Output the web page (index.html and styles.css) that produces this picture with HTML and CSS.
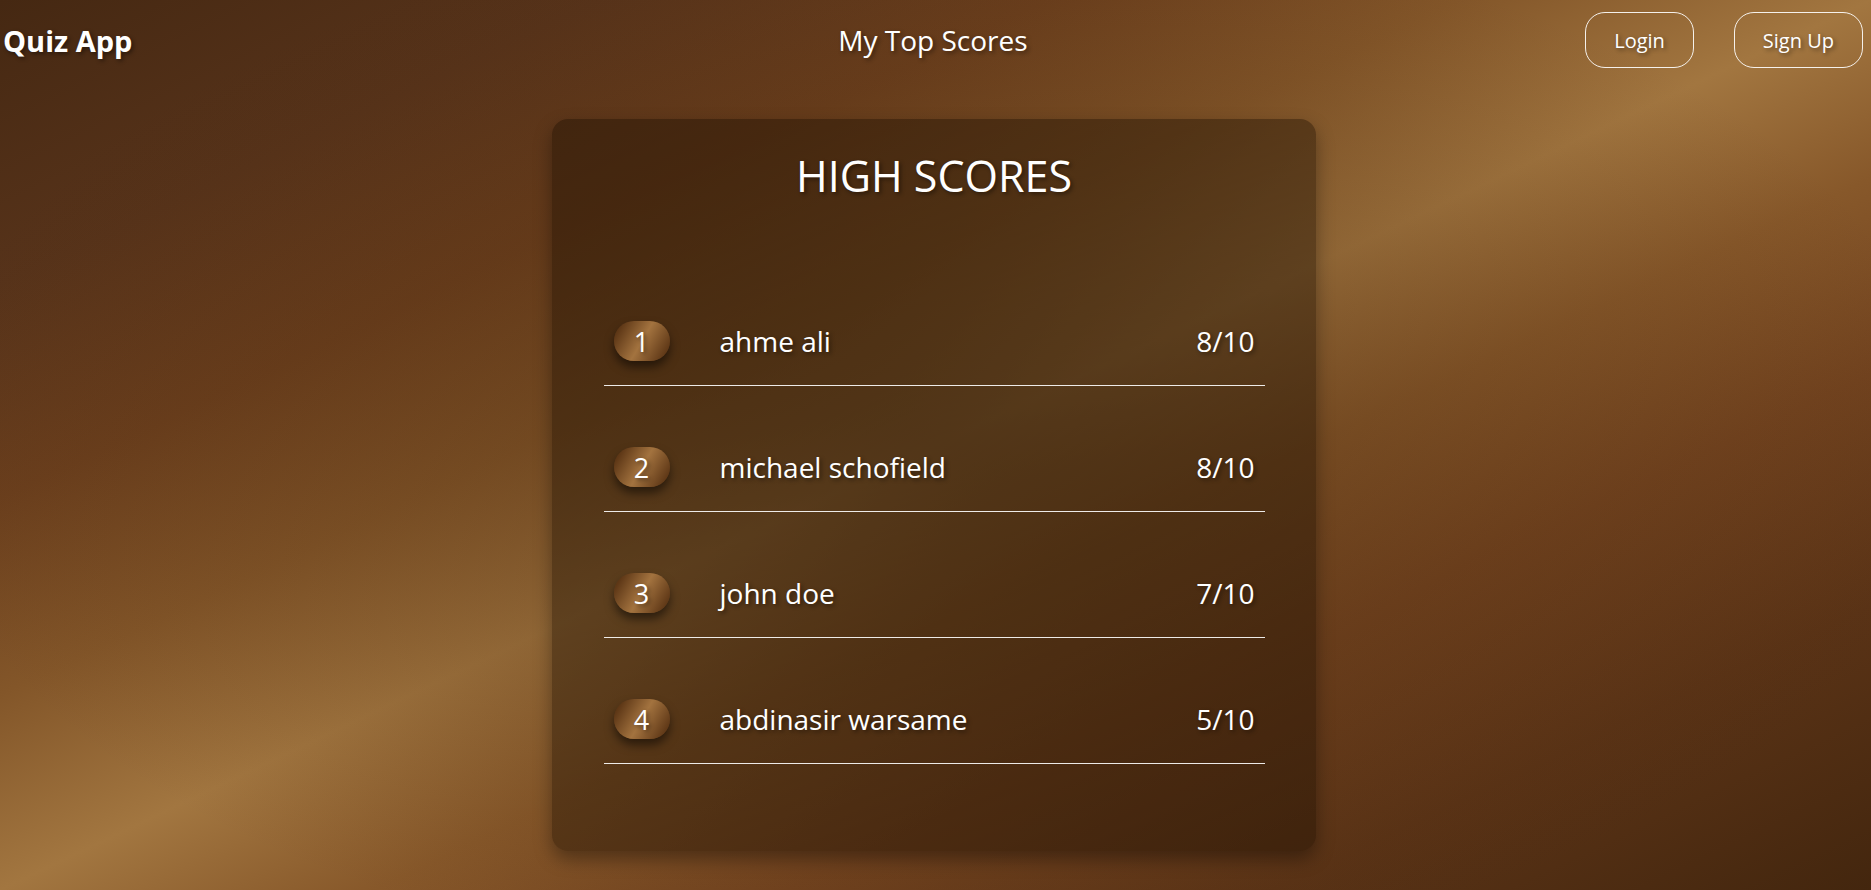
FILE: index.html
```html
<!DOCTYPE html>
<html lang="en">
<head>
<meta charset="utf-8">
<title>My Top Scores</title>
<link rel="stylesheet" href="styles.css">
</head>
<body>
<header class="topbar">
  <div class="brand">Quiz App</div>
  <div class="page-title">My Top Scores</div>
  <nav class="auth">
    <button class="btn">Login</button>
    <button class="btn">Sign Up</button>
  </nav>
</header>
<main class="main">
  <section class="card">
    <h1 class="card-title">HIGH SCORES</h1>
    <ul class="scores">
      <li class="row"><span class="rank">1</span><span class="name">ahme ali</span><span class="score">8/10</span></li>
      <li class="row"><span class="rank">2</span><span class="name">michael schofield</span><span class="score">8/10</span></li>
      <li class="row"><span class="rank">3</span><span class="name">john doe</span><span class="score">7/10</span></li>
      <li class="row"><span class="rank">4</span><span class="name">abdinasir warsame</span><span class="score">5/10</span></li>
    </ul>
  </section>
</main>
</body>
</html>
```
FILE: styles.css
```css
* { box-sizing: border-box; }
html, body { height: 100%; }
body {
  margin: 0;
  min-height: 890px;
  font-family: "Open Sans", "Noto Sans", sans-serif;
  color: #fff;
  background:
    radial-gradient(ellipse 55% 60% at 50% 50%, rgba(70,38,12,0.45), rgba(70,38,12,0) 100%),
    linear-gradient(to bottom right,
      #452812 0%, #57331a 16%, #6b3f1d 28%, #835629 39%, #a27640 50%,
      #87582a 60%, #72431f 71%, #5a3316 84%, #43260e 100%);
  overflow: hidden;
}
.topbar {
  display: grid;
  grid-template-columns: 1fr auto 1fr;
  align-items: center;
  height: 80px;
  padding: 0 8px 0 3px;
}
.brand {
  font-size: 29px;
  font-weight: 700;
  text-shadow: 2px 2px 4px rgba(0,0,0,0.45);
}
.page-title {
  font-size: 28px;
  text-shadow: 2px 2px 4px rgba(0,0,0,0.45);
}
.auth {
  display: flex;
  justify-content: flex-end;
  gap: 40px;
}
.btn {
  font-family: inherit;
  font-size: 20px;
  color: #fff;
  background: transparent;
  border: 1px solid rgba(255,255,255,0.9);
  border-radius: 20px;
  height: 56px;
  padding: 0 28px;
  text-shadow: 2px 2px 4px rgba(0,0,0,0.45);
}
.main {
  padding: 39px 4px 0 0;
}
.card {
  width: 764px;
  height: 732px;
  margin: 0 auto;
  padding: 35px 51px 0 52px;
  border-radius: 16px;
  background: rgba(25, 12, 0, 0.4);
  box-shadow: 0 8px 18px rgba(0,0,0,0.35);
}
.card-title {
  margin: 0;
  font-size: 43px;
  font-weight: 400;
  line-height: 44px;
  text-align: center;
  text-shadow: 2px 2px 4px rgba(0,0,0,0.45);
}
.scores {
  list-style: none;
  margin: 62px 0 0;
  padding: 0;
}
.row {
  display: flex;
  align-items: center;
  padding: 61px 10px 24px;
  border-bottom: 1px solid rgba(255,255,255,0.9);
  font-size: 28px;
  text-shadow: 2px 2px 4px rgba(0,0,0,0.45);
}
.rank {
  display: flex;
  align-items: center;
  justify-content: center;
  width: 56px;
  height: 40px;
  border-radius: 20px;
  font-size: 27px;
  background: linear-gradient(120deg, #5a3414 10%, #a3733f 50%, #5e3716 90%);
  box-shadow: 0 6px 10px rgba(0,0,0,0.5);
}
.name {
  margin-left: 50px;
  flex: 1;
}
.score {
  text-align: right;
}
```
